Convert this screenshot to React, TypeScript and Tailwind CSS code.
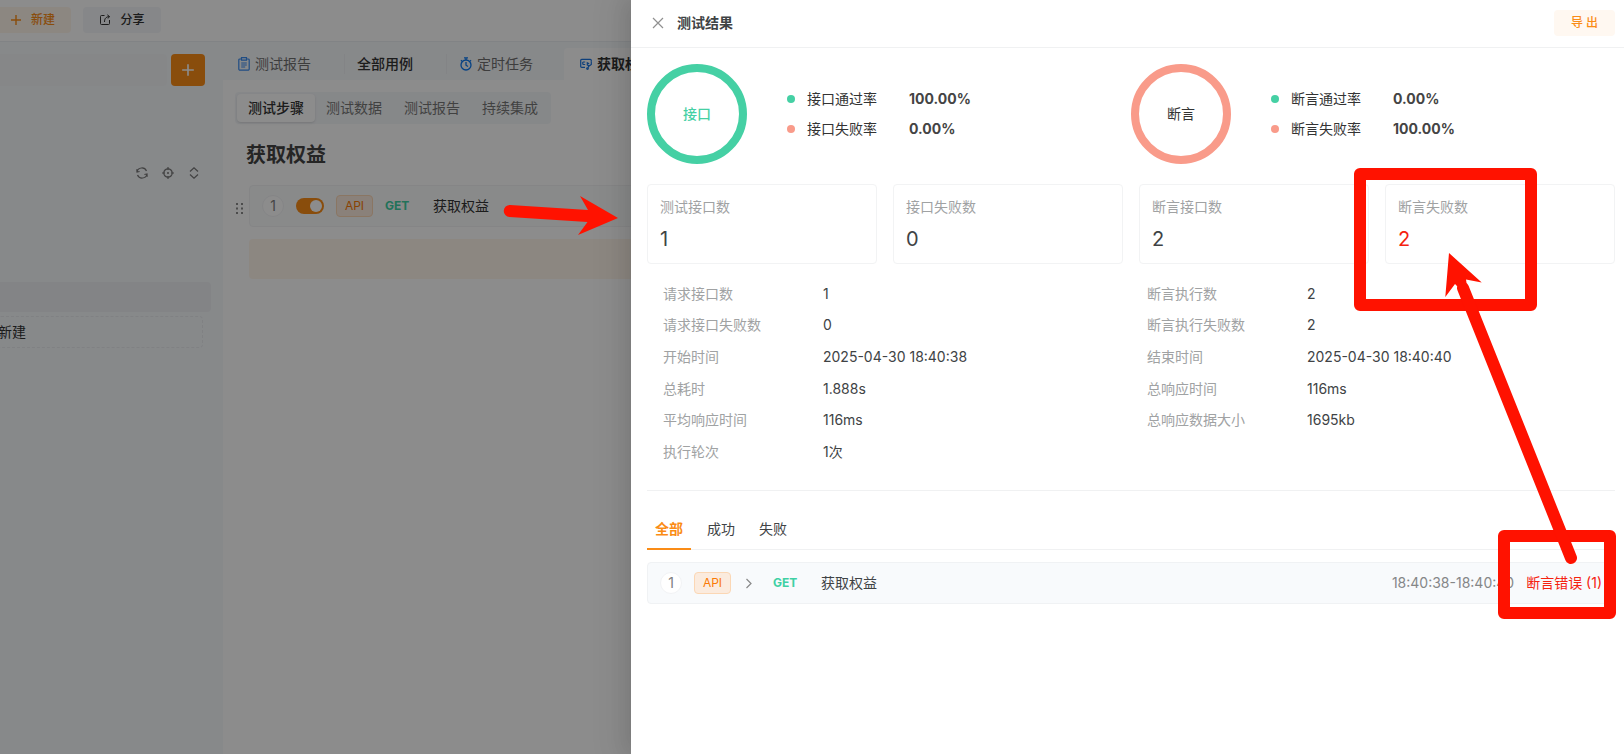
import type { ReactNode } from "react";

const sans = "font-[Inter,'Noto_Sans_CJK_SC',sans-serif]";

function PlusIcon({ className }: { className: string }) {
  return (
    <svg className={className} viewBox="0 0 12 12" fill="none" stroke="currentColor" strokeWidth="1.4" aria-hidden="true">
      <path d="M6 1v10M1 6h10" />
    </svg>
  );
}

function ShareIcon() {
  return (
    <svg className="h-3 w-3" viewBox="0 0 12 12" fill="none" stroke="currentColor" aria-hidden="true">
      <path d="M5.500 1.500H2.500a1 1 0 0 0-1 1v7a1 1 0 0 0 1 1h7a1 1 0 0 0 1-1V6M5.500 8C5.500 5 6.500 2.800 10.500 2.500M8.300.8 10.500 2.500 9 4.500" />
    </svg>
  );
}

function ClipboardIcon() {
  return (
    <svg className="h-[14px] w-3" viewBox="0 0 12 14" fill="none" stroke="currentColor" strokeWidth="1.200" aria-hidden="true">
      <path d="M3 2H1.800a1 1 0 0 0-1 1v9a1.200 1.200 0 0 0 1.200 1.200h8a1.200 1.200 0 0 0 1.200-1.200V3a1 1 0 0 0-1-1H9M3.500.7h5v2.400h-5zM3.200 6h5.600M3.200 8h5.600M3.200 10h4" />
    </svg>
  );
}

function TimerIcon() {
  return (
    <svg className="h-[14px] w-3" viewBox="0 0 12 14" fill="none" stroke="currentColor" strokeWidth="1.300" aria-hidden="true">
      <circle cx="6" cy="8" r="5" />
      <path d="M4 .8h4M6 .8V3M1 3.200l1.200 1.200M11 3.200 9.800 4.400M6 5v3.200l2 1.300" />
    </svg>
  );
}

function CaseIcon() {
  return (
    <svg className="h-3 w-3" viewBox="0 0 12 12" fill="none" stroke="currentColor" strokeWidth="1.200" aria-hidden="true">
      <path d="M5 9.400H1.700a1 1 0 0 1-1-1V2.400a1 1 0 0 1 1-1h8.600a1 1 0 0 1 1 1v1.400M2.800 4h2.400M2.800 6.500h2.400M2.800 4v2.500" />
      <path d="M11.300 3.800v2.700L9.500 7.800 7.300 7V4.800l1.900.9M9 7.500 8 9.800" />
      <circle cx="7.500" cy="10.600" r=".8" />
    </svg>
  );
}

function SyncIcon() {
  return (
    <svg className="h-3 w-3" viewBox="0 0 12 12" fill="none" stroke="currentColor" strokeWidth="1.200" aria-hidden="true">
      <path d="M1 5a5 5 0 0 1 9.500-1M11 7a5 5 0 0 1-9.500 1M.8 2.200 1 5l2.600-.5M11.200 9.800 11 7l-2.600.5" />
    </svg>
  );
}

function AimIcon() {
  return (
    <svg className="h-3 w-3" viewBox="0 0 12 12" fill="none" stroke="currentColor" strokeWidth="1.200" aria-hidden="true">
      <circle cx="6" cy="6" r="4.200" />
      <circle cx="6" cy="6" r="1" fill="currentColor" stroke="none" />
      <path d="M6 0v3M6 9v3M0 6h3M9 6h3" />
    </svg>
  );
}

function ExpandIcon() {
  return (
    <svg className="h-3 w-3" viewBox="0 0 12 12" fill="none" stroke="currentColor" strokeWidth="1.200" aria-hidden="true">
      <path d="M2 4.500 6 .8l4 3.700M2 7.500l4 3.700 4-3.700" />
    </svg>
  );
}

function StepNumber({ children }: { children: ReactNode }) {
  return (
    <span className="flex h-[22px] w-[22px] shrink-0 items-center justify-center rounded-full border border-[#f2f3f5] bg-white text-sm text-[#808080]">
      {children}
    </span>
  );
}

function ApiTag() {
  return (
    <span className="flex h-[22px] w-[37px] shrink-0 items-center justify-center rounded border border-[#fbd7b5] bg-[#fbebde] text-xs text-[#fa7a05]">
      API
    </span>
  );
}

function TabDivider() {
  return <span className="h-5 w-px shrink-0 bg-[#eef1f4]" />;
}

function Workspace() {
  const segments = ["测试数据", "测试报告", "持续集成"];
  return (
    <div className="flex min-h-screen flex-col bg-white">
      <header className="flex h-[42px] items-center gap-3 border-b border-[#eceff3] bg-white pb-px text-xs font-medium">
        <button className="flex h-[26px] w-[71px] items-center gap-[9px] rounded-r bg-[#fff6ec] pl-[10px] text-[#fa8c16]">
          <PlusIcon className="h-3 w-3" />
          新建
        </button>
        <button className="flex h-[26px] w-[78px] items-center justify-center gap-[9px] rounded bg-[#f4f6f9] text-[#333]">
          <ShareIcon />
          分享
        </button>
      </header>

      <div className="flex flex-1 bg-[#f6f9fc]">
        <aside className="w-[223px] shrink-0 pt-3">
          <div className="flex gap-1">
            <input aria-label="搜索" className="h-8 w-[167px] rounded-r bg-[#f4f6f8]" />
            <button aria-label="添加" className="flex h-8 w-[34px] items-center justify-center rounded bg-[#fa8c16] text-white">
              <PlusIcon className="h-[14px] w-[14px]" />
            </button>
          </div>
          <div className="mt-[81px] flex justify-end gap-[14px] pr-[23px] text-[#777]">
            <button aria-label="刷新"><SyncIcon /></button>
            <button aria-label="定位"><AimIcon /></button>
            <button aria-label="展开"><ExpandIcon /></button>
          </div>
          <div className="mt-[103px] mr-3 h-[30px] rounded-r bg-[#eff1f4]" />
          <button className="mt-1 -ml-[3px] flex h-8 w-[206px] items-center rounded-sm border border-dashed border-[#e9ecef] text-sm text-[#333]">
            新建
          </button>
        </aside>

        <main className="flex min-w-0 flex-1 flex-col overflow-hidden">
          <nav className="flex h-[38px] shrink-0 items-center pt-[6px] text-sm text-[#707070]">
            <a href="#report" className="flex w-[121px] shrink-0 items-center gap-[5px] pl-[15px]">
              <span className="text-[#3b8cf0]"><ClipboardIcon /></span>
              测试报告
            </a>
            <TabDivider />
            <a href="#cases" className="flex w-[101px] shrink-0 items-center pl-3 font-medium text-[#333]">
              全部用例
            </a>
            <TabDivider />
            <a href="#schedule" className="flex w-[117px] shrink-0 items-center gap-[5px] pl-[13px]">
              <span className="text-[#0a78f0]"><TimerIcon /></span>
              定时任务
            </a>
            <a href="#benefit" className="flex w-[140px] shrink-0 items-center gap-[5px] self-stretch rounded-t bg-white pl-4 font-bold text-[#333]">
              <span className="text-[#1a74e0]"><CaseIcon /></span>
              获取权益
            </a>
          </nav>

          <section className="flex-1 bg-white px-3 pt-3">
            <div className="flex h-8 w-[316px] rounded bg-[#f5f7fa] p-[2px] text-sm text-[#777]">
              <button className="w-[78px] rounded bg-white font-medium text-[#333] shadow-sm">测试步骤</button>
              {segments.map((label) => (
                <button key={label} className="w-[78px]">{label}</button>
              ))}
            </div>
            <h1 className="mt-[17px] pl-[11px] text-xl leading-7 font-bold text-[#444]">获取权益</h1>
            <div className="mt-4 flex items-center pl-px">
              <svg className="mt-1 mr-[5px] h-[11px] w-2 shrink-0" viewBox="0 0 8 11" fill="#8a8a8a" aria-hidden="true">
                <path d="M0 0h2v2H0zM5 0h2v2H5zM0 4.500h2v2H0zM5 4.500h2v2H5zM0 9h2v2H0zM5 9h2v2H5z" />
              </svg>
              <div className="flex h-[42px] flex-1 items-center rounded border border-[#f2f3f5] bg-[#fafbfc] pl-3">
                <StepNumber>1</StepNumber>
                <label className="ml-3 flex h-4 w-7 cursor-pointer items-center justify-end rounded-full bg-[#fa8c16] px-[2px]">
                  <input type="checkbox" defaultChecked aria-label="启用步骤" className="sr-only" />
                  <span className="h-3 w-3 rounded-full bg-white" />
                </label>
                <span className="ml-3 flex"><ApiTag /></span>
                <span className="ml-3 w-12 text-xs font-bold text-[#3fd0a4]">GET</span>
                <span className="text-sm text-[#333]">获取权益</span>
              </div>
            </div>
            <div className="mt-3 ml-[14px] h-10 rounded bg-[#fff6ec]" />
          </section>
        </main>
      </div>
    </div>
  );
}

type Rate = { label: string; value: string };

function RateSummary({ name, tone, rates }: { name: string; tone: "pass" | "fail"; rates: [Rate, Rate] }) {
  const ring =
    tone === "pass" ? "border-[#45d0a4] text-[#45d0a4] font-medium" : "border-[#f99b8a] text-[#333]";
  return (
    <div className="flex items-center gap-10">
      <div className={`flex h-[100px] w-[100px] items-center justify-center rounded-full border-8 ${ring}`}>{name}</div>
      <ul className="flex flex-col gap-2">
        {rates.map((rate, i) => (
          <li key={rate.label} className="flex items-center leading-[22px]">
            <span className={`h-2 w-2 rounded-full ${i === 0 ? "bg-[#45d0a4]" : "bg-[#f99b8a]"}`} />
            <span className="ml-3 w-[102px] text-[#333]">{rate.label}</span>
            <span className="font-bold text-[#444]">{rate.value}</span>
          </li>
        ))}
      </ul>
    </div>
  );
}

const cards = [
  { label: "测试接口数", value: "1" },
  { label: "接口失败数", value: "0" },
  { label: "断言接口数", value: "2" },
  { label: "断言失败数", value: "2", failed: true },
];

const details = [
  ["请求接口数", "1"],
  ["断言执行数", "2"],
  ["请求接口失败数", "0"],
  ["断言执行失败数", "2"],
  ["开始时间", "2025-04-30 18:40:38"],
  ["结束时间", "2025-04-30 18:40:40"],
  ["总耗时", "1.888s"],
  ["总响应时间", "116ms"],
  ["平均响应时间", "116ms"],
  ["总响应数据大小", "1695kb"],
  ["执行轮次", "1次"],
];

function ResultDrawer() {
  return (
    <section
      role="dialog"
      aria-label="测试结果"
      className="absolute inset-y-0 right-0 left-[631px] bg-white text-sm text-[#404345] shadow-[-6px_0_16px_0_rgba(0,0,0,0.08),-9px_0_28px_8px_rgba(0,0,0,0.05)]"
    >
      <header className="flex h-12 items-center border-b border-[#f0f1f2] pr-[9px] pb-px pl-[21px]">
        <button aria-label="关闭" className="text-[#909090]">
          <svg className="h-3 w-3" viewBox="0 0 12 12" fill="none" stroke="currentColor" strokeWidth="1.200" aria-hidden="true">
            <path d="m1 1 10 10M11 1 1 11" />
          </svg>
        </button>
        <h2 className="ml-[13px] flex-1 font-bold">测试结果</h2>
        <button className="h-[26px] w-[61px] rounded bg-[#fff8f1] text-xs font-medium text-[#fa8c16]">导 出</button>
      </header>

      <div className="pr-[9px] pl-4">
        <div className="grid grid-cols-2 pt-4">
          <RateSummary
            name="接口"
            tone="pass"
            rates={[{ label: "接口通过率", value: "100.00%" }, { label: "接口失败率", value: "0.00%" }]}
          />
          <RateSummary
            name="断言"
            tone="fail"
            rates={[{ label: "断言通过率", value: "0.00%" }, { label: "断言失败率", value: "100.00%" }]}
          />
        </div>

        <div className="mt-5 grid grid-cols-4 gap-4">
          {cards.map((card) => (
            <div key={card.label} className="h-20 rounded border border-[#f2f3f4] px-3 pt-[11px]">
              <div className="leading-[22px] text-[#a0a2a3]">{card.label}</div>
              <div className={`mt-[5px] text-xl leading-8 ${card.failed ? "text-[#f5220f]" : "text-[#404345]"}`}>{card.value}</div>
            </div>
          ))}
        </div>

        <dl className="mt-[14px] grid h-[190px] grid-cols-2 grid-rows-6">
          {details.map(([label, value]) => (
            <div key={label} className="flex items-center pl-4">
              <dt className="w-40 text-[#a0a2a3]">{label}</dt>
              <dd>{value}</dd>
            </div>
          ))}
        </dl>
        <hr className="mt-[22px] border-[#f0f1f2]" />

        <div role="tablist" className="mt-[17px] flex h-[42px] gap-2 border-b border-[#f0f1f2]">
          <button role="tab" aria-selected="true" className="h-[42px] border-b-2 border-[#fa8c16] px-2 pt-[2px] font-bold text-[#fa8c16]">全部</button>
          <button role="tab" aria-selected="false" className="h-[42px] border-b-2 border-transparent px-2 pt-[2px]">成功</button>
          <button role="tab" aria-selected="false" className="h-[42px] border-b-2 border-transparent px-2 pt-[2px]">失败</button>
        </div>

        <div className="mt-3 flex h-[42px] items-center rounded border border-[#f0f2f4] bg-[#f8fafc] px-3">
          <StepNumber>1</StepNumber>
          <span className="ml-3 flex"><ApiTag /></span>
          <button aria-label="展开详情" className="ml-[14px] w-7 text-[#888]">
            <svg className="h-3 w-2" viewBox="0 0 8 12" fill="none" stroke="currentColor" strokeWidth="1.200" aria-hidden="true">
              <path d="m1.500 2 4.500 4.500L1.500 11" />
            </svg>
          </button>
          <span className="w-12 text-xs font-bold text-[#3fd0a4]">GET</span>
          <span className="flex-1 text-[#404345]">获取权益</span>
          <span className="text-[#858788]">18:40:38-18:40:40</span>
          <span className="ml-3 text-[#f5220f]">断言错误 (1)</span>
        </div>
      </div>

      <svg className="pointer-events-none absolute top-0 right-0 h-[754px] w-[324px]" viewBox="0 0 324 754" fill="none" stroke="#ff1200" strokeWidth="12" strokeLinejoin="round" aria-hidden="true">
        <rect x="60" y="174" width="171" height="131" />
        <rect x="204" y="536" width="106" height="77" />
        <path d="M271 558 163 288" strokeLinecap="round" />
        <path d="M149 253 145.300 297l9.700-13 6 6 6-4-1-6.500 15.700 3z" fill="#ff1200" stroke="none" />
      </svg>
    </section>
  );
}

export default function App() {
  return (
    <div className={`relative min-h-screen overflow-hidden ${sans}`}>
      <Workspace />
      <div className="absolute inset-0 bg-black/45" />
      <ResultDrawer />
      <svg className="pointer-events-none absolute top-[195px] left-[503px] h-[41px] w-[116px]" viewBox="0 0 116 41" fill="#ff1200" aria-hidden="true">
        <path d="M7 10 85 15 77 1l38 22-40 17 9.500-13L6.500 22A6 6 0 0 1 7 10z" />
      </svg>
    </div>
  );
}
